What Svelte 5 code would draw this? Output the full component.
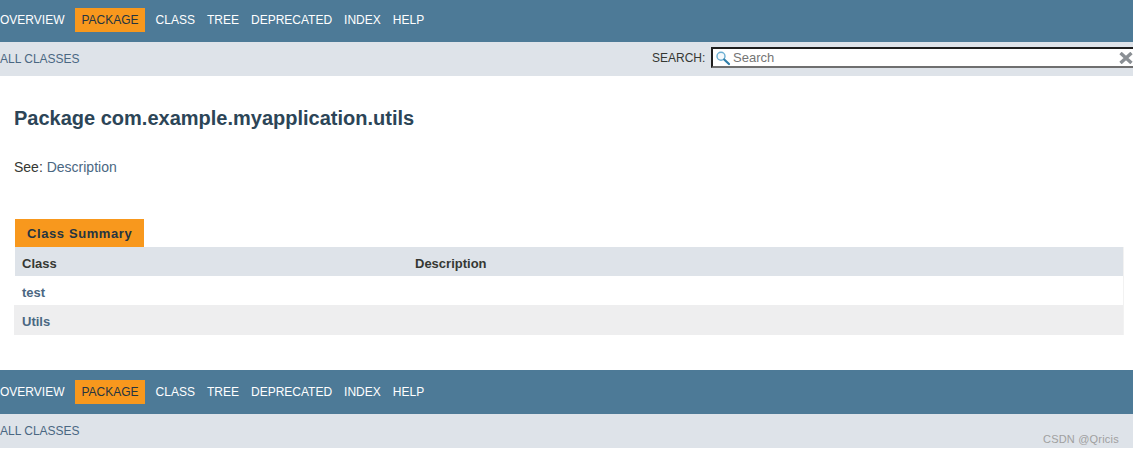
<script>
  const navItems = ['OVERVIEW', 'PACKAGE', 'CLASS', 'TREE', 'DEPRECATED', 'INDEX', 'HELP'];
  const rows = [
    { name: 'test', alt: false },
    { name: 'Utils', alt: true }
  ];
</script>

{#snippet navbar()}
  <nav class="topnav">
    <ul>
      {#each navItems as item}
        <li class:active={item === 'PACKAGE'}>{item}</li>
      {/each}
    </ul>
  </nav>
{/snippet}

<div class="page">
  {@render navbar()}
  <div class="subnav">
    <a href="#all" class="all">ALL CLASSES</a>
    <div class="search">
      <label for="q">SEARCH:</label>
      <div class="box">
        <svg class="glass" width="16" height="16" viewBox="0 0 16 16" aria-hidden="true">
          <circle cx="6" cy="6.2" r="4" fill="#f4f9fc" stroke="#6aaed2" stroke-width="1.4" />
          <path d="M9.2 9.5 L14 14" stroke="#2f7da8" stroke-width="2.2" stroke-linecap="round" />
        </svg>
        <input id="q" type="text" placeholder="Search" />
        <svg class="clear" width="14" height="12" viewBox="0 0 14 12" aria-hidden="true">
          <path d="M1.5 1 L12.5 11 M12.5 1 L1.5 11" stroke="#8a8f94" stroke-width="3.4" />
        </svg>
      </div>
    </div>
  </div>

  <main>
    <h1>Package com.example.myapplication.utils</h1>
    <p class="see">See: <a href="#desc">Description</a></p>

    <div class="tab">Class Summary</div>
    <div class="table">
      <div class="row head">
        <span class="c1">Class</span>
        <span class="c2">Description</span>
      </div>
      {#each rows as r}
        <div class="row" class:alt={r.alt}>
          <a href="#c" class="c1">{r.name}</a>
          <span class="c2"></span>
        </div>
      {/each}
    </div>
  </main>

  {@render navbar()}
  <div class="subnav">
    <a href="#all" class="all">ALL CLASSES</a>
  </div>
  <span class="mark">CSDN @Qricis</span>
</div>

<style>
  :global(body) {
    margin: 0;
    background: #fff;
    overflow: hidden;
  }
  .page {
    position: relative;
    height: 454px;
    overflow: hidden;
    font-family: "Liberation Sans", Arial, sans-serif;
    color: #353833;
  }
  a {
    color: #4a6782;
    text-decoration: none;
  }
  .topnav {
    background: #4d7a97;
    height: 44px;
    display: flex;
    align-items: center;
  }
  .topnav:first-child {
    height: 42px;
    padding-bottom: 2px;
    box-sizing: border-box;
  }
  ul {
    list-style: none;
    display: flex;
    margin: 0;
    padding: 0;
    font-size: 12px;
    color: #fff;
  }
  li {
    margin-right: 12px;
    line-height: 24px;
  }
  li.active {
    background: #f8981d;
    color: #253441;
    padding: 0 6px;
    margin-left: -1px;
    margin-right: 11px;
  }
  .subnav {
    background: #dee3e9;
    height: 34px;
    font-size: 12px;
    display: grid;
    grid-template-columns: 652px 1fr;
    overflow: hidden;
  }
  .all {
    line-height: 34px;
  }
  .search {
    display: flex;
    align-items: flex-start;
    padding-top: 5px;
  }
  .search label {
    line-height: 22px;
    width: 59px;
    flex: none;
  }
  .box {
    flex: none;
    width: 422px;
    height: 21px;
    box-sizing: border-box;
    border: 2px solid;
    border-color: #1e1e1e #1e1e1e #6f6f6f #1e1e1e;
    border-right: 0;
    background: #fff;
    display: flex;
    align-items: center;
    position: relative;
  }
  .glass {
    position: absolute;
    left: 2px;
    top: 1px;
  }
  .box input {
    border: 0;
    outline: 0;
    padding: 0 0 0 20px;
    background: transparent;
    font: 13px "Liberation Sans", Arial, sans-serif;
    width: 100%;
    height: 16px;
  }
  .box input::placeholder {
    color: #757575;
    opacity: 1;
  }
  .clear {
    position: absolute;
    right: 0;
    top: 3px;
  }
  main {
    height: 294px;
    padding: 31px 9px 0 15px;
    box-sizing: border-box;
  }
  h1 {
    margin: 0 0 0 -1px;
    font-size: 20px;
    line-height: 23px;
    font-weight: bold;
    color: #2c4557;
  }
  .see {
    margin: 28px 0 0 -1px;
    font-size: 14px;
    line-height: 18px;
    color: #353833;
  }
  .tab {
    margin-top: 43px;
    width: 129px;
    height: 28px;
    box-sizing: border-box;
    background: #f8981d;
    color: #253441;
    font-size: 13px;
    font-weight: bold;
    line-height: 29px;
    padding-left: 12px;
    letter-spacing: 0.6px;
  }
  .row {
    display: grid;
    grid-template-columns: 400px 1fr;
    height: 29px;
    box-sizing: border-box;
    padding-top: 2px;
    line-height: 29px;
    font-size: 13px;
    font-weight: bold;
    background: #fff;
    border-right: 1px solid #f2f2f2;
  }
  .row.head {
    background: #dee3e9;
    color: #353833;
  }
  .row.alt {
    background: #eeeeef;
    height: 30px;
    margin-left: -1px;
    padding-left: 1px;
  }
  .c1 {
    padding-left: 7px;
  }
  .mark {
    position: absolute;
    left: 1043px;
    top: 432px;
    font-size: 11px;
    line-height: 14px;
    color: #a0a0a0;
    letter-spacing: 0.2px;
  }
</style>
